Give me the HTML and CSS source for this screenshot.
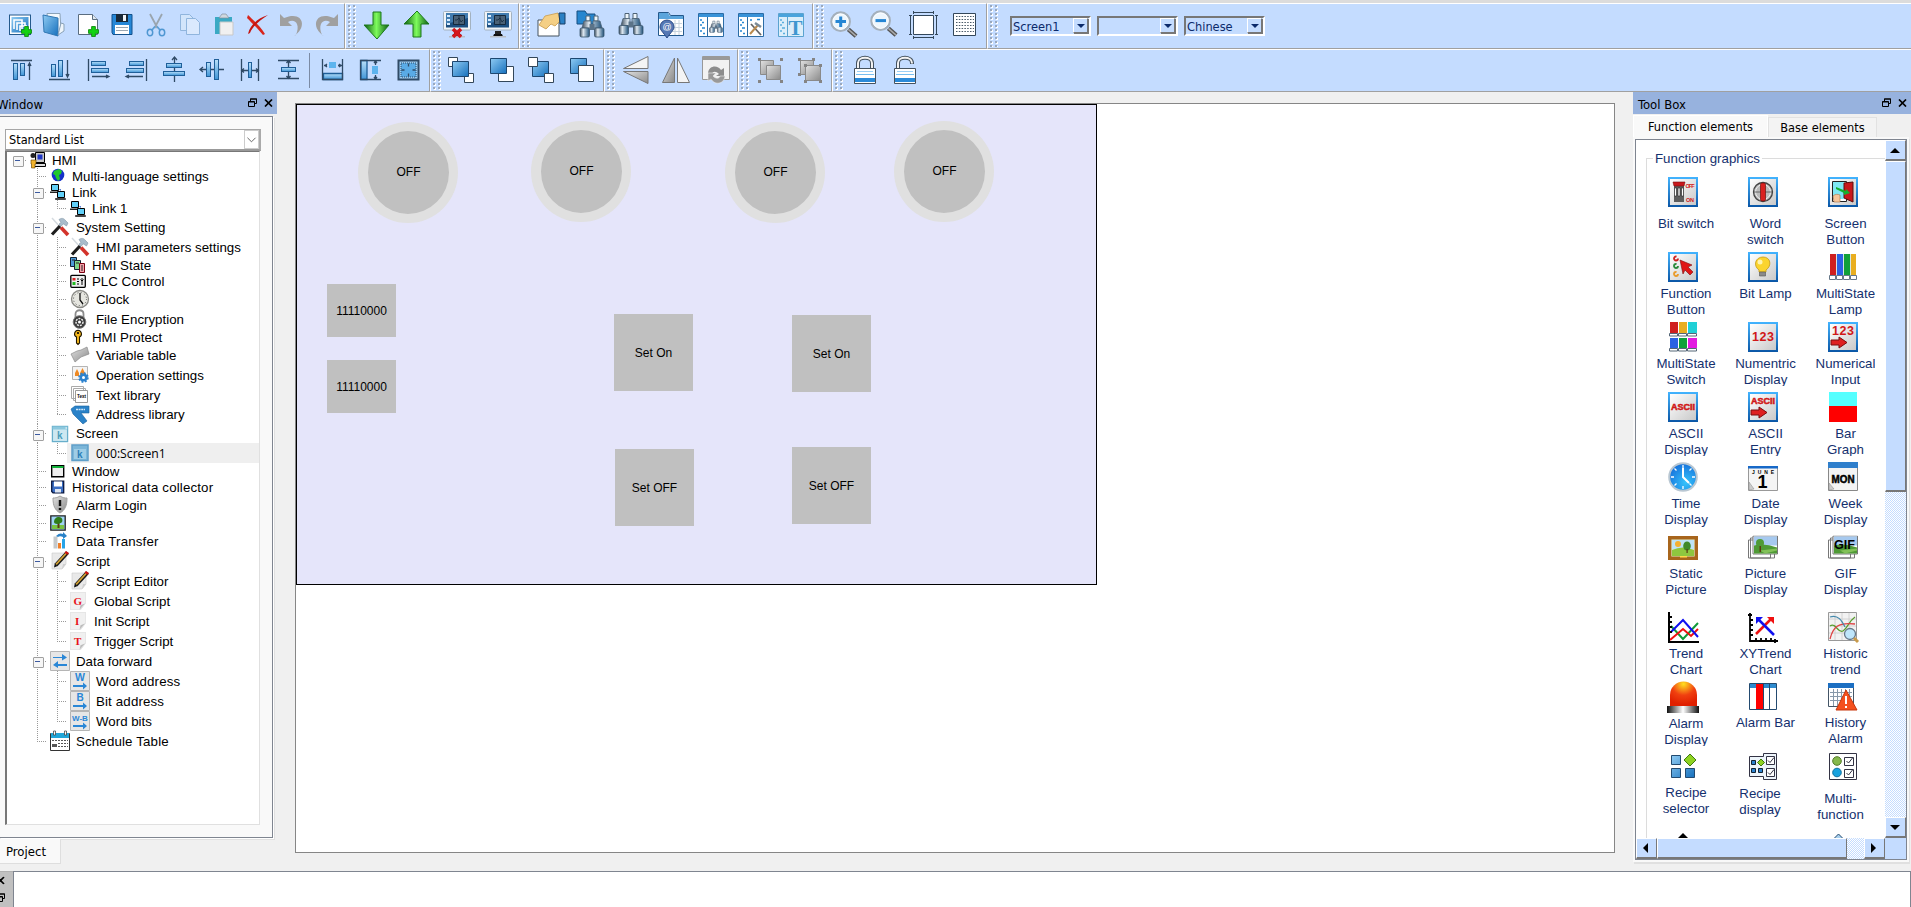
FILE: index.html
```html
<!DOCTYPE html>
<html lang="en">
<head>
<meta charset="utf-8">
<title>HMI Editor</title>
<link rel="stylesheet" href="styles.css">
</head>
<body>
<svg class="defs" width="0" height="0" aria-hidden="true">
  <defs>
    <linearGradient id="gB" x1="0" y1="0" x2="1" y2="1"><stop offset="0" stop-color="#8fcbf3"/><stop offset="1" stop-color="#1670bd"/></linearGradient>
    <linearGradient id="gL" x1="0" y1="0" x2="0" y2="1"><stop offset="0" stop-color="#b9e0fa"/><stop offset="1" stop-color="#3e94d6"/></linearGradient>
    <linearGradient id="gS" x1="0" y1="0" x2="1" y2="1"><stop offset="0" stop-color="#e2e2e2"/><stop offset="1" stop-color="#8a8a8a"/></linearGradient>
    <linearGradient id="gN" x1="0" y1="0" x2="1" y2="0"><stop offset="0" stop-color="#0c5a12"/><stop offset=".5" stop-color="#7dfb5c"/><stop offset="1" stop-color="#0c5a12"/></linearGradient>
    <linearGradient id="gP" x1="0" y1="0" x2="1" y2="0"><stop offset="0" stop-color="#3a4a5a"/><stop offset=".35" stop-color="#dfe9f1"/><stop offset="1" stop-color="#1d4f78"/></linearGradient>
    <linearGradient id="gM" x1="0" y1="0" x2="1" y2="0"><stop offset="0" stop-color="#111"/><stop offset=".5" stop-color="#fff"/><stop offset="1" stop-color="#111"/></linearGradient>
    <linearGradient id="gF" x1="0" y1="0" x2="0" y2="1"><stop offset="0" stop-color="#43b4ff"/><stop offset="1" stop-color="#0a56a6"/></linearGradient>
    <linearGradient id="gI" x1="0" y1="0" x2="1" y2="1"><stop offset="0" stop-color="#fff"/><stop offset="1" stop-color="#c9c9c9"/></linearGradient>
    <radialGradient id="gR" cx=".5" cy=".1" r=".8"><stop offset="0" stop-color="#ffe020"/><stop offset=".55" stop-color="#f04010"/><stop offset="1" stop-color="#e02000"/></radialGradient>
    <radialGradient id="gC" cx=".6" cy=".7" r=".8"><stop offset="0" stop-color="#35c3fb"/><stop offset="1" stop-color="#1267d8"/></radialGradient>
    <symbol id="plus" viewBox="0 0 10 10"><path d="M3.3.5h3.4v2.8h2.8v3.4H6.700v2.800H3.300V6.700H.5V3.300h2.800z" fill="#12d312" stroke="#0a8a0a" stroke-width=".8"/></symbol>
    <symbol id="bino" viewBox="0 0 26 24"><path d="M7 2h4v5H7zM15 2h4v5h-4z" fill="#eef5fa" stroke="#4d6275"/><path d="M5 7h7v7H3zM14 7h7l2 7h-9z" fill="url(#gP)" stroke="#4d6275" stroke-width=".8"/><path d="M10.500 10h5v6h-5z" fill="#5b7388"/><rect x="1" y="14" width="9.500" height="9" rx="1.500" fill="url(#gP)" stroke="#3b556c" stroke-width=".8"/><rect x="15.500" y="14" width="9.500" height="9" rx="1.500" fill="url(#gP)" stroke="#3b556c" stroke-width=".8"/></symbol>
    <symbol id="monitor" viewBox="0 0 28 28"><rect x=".5" y=".5" width="27" height="18.500" rx="1" fill="#f1f4f7" stroke="#a3b2c0"/><rect x="3" y="2" width="22" height="14.500" fill="#1d4f80"/><path d="M3 2h22v5L3 13z" fill="#5b9bd0" opacity=".6"/><path d="M10.500 4.500h11v9h-11z" fill="#4a6176" stroke="#14293d"/><path d="M12 9h2l2-2 2 4 2-2M16 5v8" fill="none" stroke="#14293d" stroke-width=".8"/><path d="M4 4h3v2H4zM4 8h3v2H4zM4 12h3v2H4z" fill="#d8ecff"/><path d="M11 20h6v3h-6z" fill="#222"/><path d="M10 23h8l1 2.500H9z" fill="#111"/><path d="M6 25h16v1.500H6z" fill="#b9bec4"/></symbol>
    <symbol id="lens" viewBox="0 0 30 30"><path d="M20 19l8 7" stroke="#555" stroke-width="4.500"/><path d="M20 19l8 7" stroke="#a9a9a9" stroke-width="1.500"/><circle cx="12" cy="11" r="9.500" fill="#edf6fd" stroke="#a4b0bc" stroke-width="2.400"/><circle cx="12" cy="11" r="8" fill="none" stroke="#fff"/></symbol>
    <symbol id="frame" viewBox="0 0 30 30"><rect width="30" height="30" fill="url(#gF)"/><rect x="2" y="2" width="26" height="26" fill="url(#gI)"/></symbol>
    <symbol id="pc" viewBox="0 0 16 16"><path d="M1.500.5h7v6h-7z" fill="#62d0f8" stroke="#000"/><path d="M0 7.500h9v1.500H0z" fill="#222"/><path d="M9.500 5.500h1v1" stroke="#2456c8" fill="none"/><path d="M7.500 7.500h7v6h-7z" fill="#62d0f8" stroke="#000"/><path d="M5.500 14.500h10v1h-10z" fill="#ddd" stroke="#000" stroke-width=".7"/></symbol>
    <symbol id="tools" viewBox="0 0 20 20"><path d="M2 1l9 10" stroke="#d5dbe0" stroke-width="1.500"/><path d="M9 2.500c3-2 5-1 6 .5l3 3-1.500 3-3-2-2.500 2-2-2 2-1.500z" fill="#a9bccb" stroke="#7d93a5" stroke-width=".6"/><path d="M10 9l-8 8.500" stroke="#1d1d1d" stroke-width="3.200"/><path d="M11 10.500l7 7.500" stroke="#d3332b" stroke-width="3.600"/></symbol>
    <symbol id="pencil" viewBox="0 0 20 20"><path d="M2 2h14v11l-4 5H2z" fill="#e9e9e9" stroke="#c9c9c9" stroke-width=".6"/><path d="M12 18l1-5h3z" fill="#cfcfcf"/><path d="M17.500 1.500L6 14" stroke="#1a1a1a" stroke-width="4"/><path d="M16.500 2L6 13.500" stroke="#d6a432" stroke-width="1.800"/><path d="M16 0l3 2-1.500 1.800-3-2z" fill="#c11"/><path d="M4 16.500l.8-4 2.800 2.500z" fill="#111"/></symbol>
    <symbol id="kwin" viewBox="0 0 17 17"><rect x=".8" y=".8" width="15.400" height="15.400" fill="#cde8f1" stroke="#67aecb" stroke-width="1.500"/><path d="M1 1h15v3H1z" fill="#8cc8de"/><path d="M14 2h1.500v1H14z" fill="#fff"/></symbol>
    <symbol id="page" viewBox="0 0 16 18"><path d="M.3.3h15.400V11l-5 6.700H.3z" fill="#f0f0f0" stroke="#d6d6d6" stroke-width=".6"/><path d="M9.500 17.700l1-4.500 4.500-1.700z" fill="#bdbdbd"/></symbol>
    <symbol id="tile" viewBox="0 0 20 20"><path d="M.5.5h19v19H.5z" fill="#e6e6e6" stroke="#b5b5b5"/></symbol>
    <symbol id="pic" viewBox="0 0 30 24"><path d="M.5 4.500h22v18h-22zM2.500 2.500h24v20h-24z" fill="#fff" stroke="#777"/><path d="M5 .5h24.500v18H5z" fill="#fff" stroke="#777"/><path d="M6 1h23v9H6z" fill="#a6c9ef"/><path d="M6 10q10-3 23 2v6H6z" fill="#4f9a35"/><path d="M12 15l17-2v2l-12 3z" fill="#82c158"/></symbol>
    <symbol id="restore" viewBox="0 0 9 9"><path d="M2.500 3V1h6v4.500H6.500M2 1h7" fill="none" stroke="#000"/><path d="M.5 3.500h6v5h-6zM.5 4h6" fill="none" stroke="#000"/></symbol>
    <symbol id="close" viewBox="0 0 9 8"><path d="M1 .5l7 7M8 .5l-7 7" fill="none" stroke="#000" stroke-width="1.700"/></symbol>
  </defs>
</svg>

<header class="toolbars">
  <div class="bar-row row-main">
    <div class="bar t1">
      <div class="btn"><svg viewBox="0 0 28 28"><rect x="3.500" y="4" width="21" height="19.500" fill="#fff" stroke="#24598c"/><rect x="5.500" y="6" width="17" height="15.500" fill="url(#gB)"/><path d="M8 18V9h8v9M11 19v-7h8v7M14 20v-5h7" fill="none" stroke="#fff" stroke-width="1.600"/><use href="#plus" x="15" y="15" width="11" height="11"/></svg></div>
      <div class="btn"><svg viewBox="0 0 28 28"><path d="M7 2.500h13l1 18H9z" fill="#f4f9fd" stroke="#8aa2b8"/><path d="M3 4l15 3v18L4 21z" fill="url(#gB)" stroke="#3177b3"/><path d="M21 12l3 1v7l-6 4z" fill="#eef5fb" stroke="#8aa2b8"/></svg></div>
      <div class="btn"><svg viewBox="0 0 28 28"><path d="M4.500 3.500h14l5 5v15h-19z" fill="#fff" stroke="#5a6d80"/><path d="M18.500 3.500v5h5" fill="#dfe8f0" stroke="#5a6d80"/><use href="#plus" x="14" y="15" width="11" height="11"/></svg></div>
      <div class="btn"><svg viewBox="0 0 28 28"><path d="M4 3.500h20v20H5l-1-2z" fill="#2687d6" stroke="#13518c"/><path d="M8 3h12v8H8z" fill="#1b2937"/><path d="M15 4h3v6h-3z" fill="#f3f6f8"/><path d="M7 14h14v9H7z" fill="#fff"/><path d="M8 16.500h12M8 19.500h12" stroke="#9aa7b2"/></svg></div>
      <div class="btn"><svg viewBox="0 0 28 28"><path d="M8 3l7.500 14M20 3l-7.500 14" stroke="#9aa5ae" stroke-width="1.800"/><path d="M15 15.500l3 3.500M13 15.500L10 19" stroke="#5b9fd6" stroke-width="1.800"/><ellipse cx="8" cy="21.500" rx="2.700" ry="3.300" fill="none" stroke="#4f97d2" stroke-width="1.500"/><ellipse cx="20" cy="21.500" rx="2.700" ry="3.300" fill="none" stroke="#4f97d2" stroke-width="1.500"/></svg></div>
      <div class="btn dim"><svg viewBox="0 0 28 28"><path d="M4.500 3.500h9l4 4v12h-13z" fill="#dcebfa" stroke="#6f9cc8"/><path d="M10.500 7.500h9l4 4v12h-13z" fill="#e9f3fc" stroke="#6f9cc8"/></svg></div>
      <div class="btn"><svg viewBox="0 0 28 28"><path d="M5 6h17v17H5z" fill="#3aa9c4"/><path d="M9 7l3-4h4l3 4z" fill="#cfd8df" stroke="#81909d" stroke-width=".7"/><path d="M10 11h13v13H10z" fill="#f0f0f0" stroke="#c8c8c8"/></svg></div>
      <div class="btn"><svg viewBox="0 0 28 28"><path d="M4 4c4 4 12 11 17 19l-2 1C15 19 8 12 3 7z" fill="#d8241b"/><path d="M24 4C16 9 9 15 6 22l-2 1C6 14 14 7 24 4z" fill="#c41510"/></svg></div>
      <div class="btn"><svg viewBox="0 0 28 28"><path d="M2 3v12h12l-4-4c6-4 13 1 8 13l-2 1C30 16 25-1 6 7z" fill="#a0a0a0"/></svg></div>
      <div class="btn"><svg viewBox="0 0 28 28"><path d="M26 3v12H14l4-4c-6-4-13 1-8 13l2 1C-2 16 3-1 22 7z" fill="#a0a0a0"/></svg></div>
    </div>
    <div class="bar t2 grip">
      <div class="btn"><svg viewBox="0 0 28 28"><path d="M10 1h8v13h8L14 28 1 14h9z" fill="url(#gN)" stroke="#1c7a1c"/></svg></div>
      <div class="btn"><svg viewBox="0 0 28 28"><path d="M10 26h8V13h8L14 0 1 13h9z" fill="url(#gN)" stroke="#1c7a1c"/></svg></div>
      <div class="btn"><svg viewBox="0 0 28 28"><use href="#monitor" width="28" height="28"/><path d="M10 18l8 8M18 18l-8 8" stroke="#d5161b" stroke-width="3.500"/></svg></div>
      <div class="btn"><svg viewBox="0 0 28 28"><use href="#monitor" width="28" height="28"/></svg></div>
    </div>
    <div class="bar t3 grip">
      <div class="btn"><svg viewBox="0 0 28 28"><path d="M1 9h21v16H1z" fill="#fff" stroke="#44525f"/><path d="M2 14L8 5l13-3 2 8-5 5-4-2-5 5z" fill="#f4cf85" stroke="#c89a4b" stroke-width=".8"/><path d="M22 2h6v11h-5z" fill="#2a80c4" stroke="#173f66"/></svg></div>
      <div class="btn"><svg viewBox="0 0 28 28"><path d="M0 0h8l2 3h8v10H0z" fill="#2686cf" stroke="#174f80"/><use href="#bino" x="2" y="3" width="26" height="24"/></svg></div>
      <div class="btn"><svg viewBox="0 0 28 28"><use href="#bino" x="1" y="0" width="26" height="25"/></svg></div>
      <div class="btn"><svg viewBox="0 0 28 28"><path d="M1.500 1.500h10l2 3h13v20h-25z" fill="#fff" stroke="#24598c"/><path d="M2 2h9l2 3h13v3H2z" fill="#5ba5dc"/><path d="M14 12.500h11M14 16.500h11M14 20.500h11M18 9v15M22 9v15" stroke="#c8d4de"/><path d="M10 27c-4-6-7-8-7-11a7 7 0 0 1 14 0c0 3-3 5-7 11z" fill="#5678b4" stroke="#2b4c88"/><text x="5.500" y="19" font-size="9" fill="#fff">@</text></svg></div>
      <div class="btn"><svg viewBox="0 0 28 28"><path d="M1.500 2.500h25v23h-25z" fill="#fff" stroke="#2b6ca6"/><path d="M2 3h24v3H2z" fill="#3a93d8"/><path d="M10.500 6v19" stroke="#2b6ca6"/><path d="M3 9h2M5 11.500h2M3 14h2M5 17h3M3 20h2M6 22.500h2" stroke="#2487d2" stroke-width="1.600"/><use href="#bino" x="12" y="9" width="14" height="13"/></svg></div>
      <div class="btn"><svg viewBox="0 0 28 28"><path d="M1.500 2.500h25v23h-25z" fill="#fff" stroke="#2b6ca6"/><path d="M2 3h24v3H2z" fill="#3a93d8"/><path d="M10.500 6v19" stroke="#2b6ca6"/><path d="M3 9h2M5 11.500h2M3 14h2M5 17h3M3 20h2M6 22.500h2M13 9h2M20 8.500h3" stroke="#2487d2" stroke-width="1.600"/><path d="M14 13l10 11" stroke="#666" stroke-width="1.800"/><path d="M21 14l-8 9" stroke="#b98b4f" stroke-width="2"/><path d="M18 12l6 4" stroke="#7b8b98" stroke-width="2.500"/></svg></div>
      <div class="btn"><svg viewBox="0 0 28 28"><path d="M1.500 2.500h25v23h-25z" fill="#dceefa" stroke="#5ba3cf"/><path d="M2 3h24v3H2z" fill="#4aa3dc"/><path d="M10.500 6v19" stroke="#5ba3cf"/><path d="M3 9h2M5 11.500h2M3 14h2M5 17h3M3 20h2M6 22.500h2" stroke="#59aede" stroke-width="1.600"/><text x="11.500" y="24" class="serif" font-size="21" fill="#3f97d0">T</text></svg></div>
    </div>
    <div class="bar t4 grip">
      <div class="btn"><svg viewBox="0 0 28 28"><use href="#lens" x="-1" y="0" width="29" height="29"/><path d="M5.500 10.600h10.500M10.700 5.500V16" stroke="#2686d4" stroke-width="3"/></svg></div>
      <div class="btn"><svg viewBox="0 0 28 28"><use href="#lens" x="-1" y="-1" width="29" height="29"/><path d="M5.500 9.600h10.500" stroke="#2686d4" stroke-width="3"/></svg></div>
      <div class="btn"><svg viewBox="0 0 28 28"><path d="M3.500 4.500h20v19h-20z" fill="#fff" stroke="#33475a"/><path d="M3 1.500h21M3.500 0v3M23.500 0v3M3 26.500h21M3.500 25v3M23.500 25v3M.5 4v20M-1 4.500h3M-1 23.500h3M26.500 4v20M25 4.500h3M25 23.500h3" stroke="#33475a"/></svg></div>
      <div class="btn"><svg viewBox="0 0 28 28"><path d="M2.500 2.500h22v22h-22z" fill="#fff" stroke="#33475a"/><path d="M5 5.500h18M5 8.500h18M5 11.500h18M5 14.500h18M5 17.500h18M5 20.500h18" stroke="#4a5a68" stroke-dasharray="1.500 1.300"/></svg></div>
    </div>
    <div class="bar t5 grip">
      <div class="combo"><span>Screen1</span><i></i></div>
      <div class="combo"><span></span><i></i></div>
      <div class="combo"><span>Chinese</span><i></i></div>
    </div>
  </div>
  <div class="bar-row row-align">
    <div class="bar a1">
      <div class="btn"><svg class="ln" viewBox="0 0 28 28"><path d="M3 4.500h21M21.500 8v16M20 10l1.500-3 1.500 3"/><rect class="f" x="5.500" y="7.500" width="4" height="16"/><rect class="f" x="12.500" y="7.500" width="4" height="12"/></svg></div>
      <div class="btn"><svg class="ln" viewBox="0 0 28 28"><path d="M3 23.500h21M21.500 4v16M20 18l1.500 3 1.500-3"/><rect class="f" x="5.500" y="8.500" width="4" height="12"/><rect class="f" x="12.500" y="4.500" width="4" height="16"/></svg></div>
      <div class="btn"><svg class="ln" viewBox="0 0 28 28"><path d="M4.500 3v22M8 20.500h16M22 19l3 1.500-3 1.500"/><rect class="f" x="7.500" y="5.500" width="14" height="4"/><rect class="f" x="7.500" y="12.500" width="17" height="4"/></svg></div>
      <div class="btn"><svg class="ln" viewBox="0 0 28 28"><path d="M24.500 3v22M5 20.500h16M7 19l-3 1.500 3 1.500"/><rect class="f" x="7.500" y="5.500" width="14" height="4"/><rect class="f" x="4.500" y="12.500" width="17" height="4"/></svg></div>
      <div class="btn"><svg class="ln" viewBox="0 0 28 28"><path d="M14.500 2v24M12 4l2.500-3L17 4"/><rect class="f" x="6.500" y="7.500" width="15" height="4"/><rect class="f" x="3.500" y="15.500" width="21" height="4"/></svg></div>
      <div class="btn"><svg class="ln" viewBox="0 0 28 28"><path d="M2 13.500h24M5 11l-3 2.500L5 16"/><rect class="f" x="8.500" y="6.500" width="4" height="14"/><rect class="f" x="16.500" y="3.500" width="4" height="20"/></svg></div>
      <div class="btn"><svg class="ln" viewBox="0 0 28 28"><path d="M5.500 3v22M22.500 3v22M6 14.500h17M8 12.500l-2.500 2 2.500 2M20 12.500l2.500 2-2.500 2"/><rect class="f" x="12.500" y="6.500" width="3" height="15"/></svg></div>
      <div class="btn"><svg class="ln" viewBox="0 0 28 28"><path d="M4 4.500h21M4 22.500h21M14.500 5v17M12.500 7l2-2.500 2 2.500M12.500 20l2 2.500 2-2.500"/><rect class="f" x="7.500" y="11.500" width="14" height="4"/></svg></div>
      <div class="sep"></div>
      <div class="btn"><svg class="ln" viewBox="0 0 28 28"><path class="f" d="M4.500 17.500h19v6h-19z"/><path d="M3.500 3v20.500h20V3M5 9.500h3M19 9.500h4M8 8l-2 1.500L8 11M20 8l2 1.500-2 1.500" stroke-width="1.600"/><rect x="10" y="6" width="7" height="6" fill="#5db4ee" stroke="none"/></svg></div>
      <div class="btn"><svg class="ln" viewBox="0 0 28 28"><path class="f" d="M4 4.500h6v19H4z"/><path d="M24 4.500H3.500v19H24M18.500 5v4M18.500 19v4M17 7l1.500-2L20 7M17 21l1.500 2 1.500-2" stroke-width="1.600"/><rect x="15" y="10" width="6" height="8" fill="#5db4ee" stroke="none"/></svg></div>
      <div class="btn"><svg class="ln" viewBox="0 0 28 28"><path d="M3.500 4.500h20v19h-20z" class="k"/><path d="M6 7h15v14H6z" class="m"/><path d="M13.500 7.500v3M13.500 17.500v3M6.500 14h3M17.500 14h3" stroke-width="2.400"/></svg></div>
    </div>
    <div class="bar a2 grip">
      <div class="btn"><svg class="sq" viewBox="0 0 28 28"><path class="w" d="M1.500 1.500h9v9h-9zM17.500 17.500h9v9h-9z"/><path class="b" d="M5.500 5.500h16v15h-16z"/></svg></div>
      <div class="btn"><svg class="sq" viewBox="0 0 28 28"><path class="w" d="M11.500 10.500h15v15h-15z"/><path class="b" d="M3.500 2.500h16v15h-16z"/></svg></div>
      <div class="btn"><svg class="sq" viewBox="0 0 28 28"><path class="b" d="M5.500 5.500h16v15h-16z"/><path class="w" d="M1.500 1.500h9v9h-9zM17.500 17.500h9v9h-9z"/></svg></div>
      <div class="btn"><svg class="sq" viewBox="0 0 28 28"><path class="b" d="M2.500 2.500h16v15h-16z"/><path class="w" d="M10.500 9.500h15v16h-15z"/></svg></div>
    </div>
    <div class="bar a3 grip">
      <div class="btn"><svg viewBox="0 0 28 28"><path d="M26 .5v12L1.500 12.500z" fill="#f4f4f4" stroke="#777"/><path d="M26 27.500v-12H1.500z" fill="url(#gS)" stroke="#777"/></svg></div>
      <div class="btn"><svg viewBox="0 0 28 28"><path d="M12.500 2v24.500H.5z" fill="url(#gS)" stroke="#777"/><path d="M15.500 2v24.500h12z" fill="#f4f4f4" stroke="#777"/></svg></div>
      <div class="btn"><svg viewBox="0 0 28 28"><path d="M.5.500h27v23H.5z" fill="#f2f2f2" stroke="#999"/><path d="M1 1h26v3H1z" fill="#999"/><path d="M6 17c1-8 10-8 13-3l3-2v8h-8l3-2c-3-3-6-3-7 0z" fill="#8d8d8d"/><path d="M23 20c-1 9-11 9-14 3l-3 2v-8h8l-3 3c3 3 6 3 7 0z" fill="#999" stroke="#eee" stroke-width=".6"/></svg></div>
    </div>
    <div class="bar a4 grip">
      <div class="btn"><svg viewBox="0 0 28 28"><path d="M4.500 4.500h13v14h-13z" fill="url(#gS)" stroke="#8a8a8a"/><path d="M10.500 9.500h14v14h-14z" fill="url(#gS)" stroke="#8a8a8a"/><path d="M2 2h3v3H2zM24 2h3v3h-3zM2 24h3v3H2zM24 24h3v3h-3z" fill="#858585"/></svg></div>
      <div class="btn"><svg viewBox="0 0 28 28"><path d="M4.500 4.500h13v14h-13z" fill="url(#gS)" stroke="#8a8a8a"/><path d="M9.500 9.500h15v15h-15z" fill="url(#gS)" stroke="#8a8a8a"/><path d="M2 2h3v3H2zM16 2h3v3h-3zM2 17h3v3H2zM23 8h3v3h-3zM8 24h3v3H8zM23 24h3v3h-3zM8 8h3v3H8z" fill="#858585"/></svg></div>
    </div>
    <div class="bar a5 grip">
      <div class="btn"><svg viewBox="0 0 28 28"><path d="M7 13V7c0-7 14-7 14 0v6" fill="none" stroke="#45525e" stroke-width="4"/><path d="M7 13V7c0-7 14-7 14 0v6" fill="none" stroke="#f2f2f2" stroke-width="2"/><path d="M3.500 12.500h21v15h-21z" fill="#fff" stroke="#45525e"/><path d="M6 15.500h16" stroke="#9bd0f6"/><path d="M5 18.500h18" stroke="#76bdf0"/><path d="M4 22h20v4H4z" fill="#2b8ad8"/></svg></div>
      <div class="btn"><svg viewBox="0 0 28 28"><path d="M7 13V7c0-7 14-7 14 0v1" fill="none" stroke="#45525e" stroke-width="4"/><path d="M7 13V7c0-7 14-7 14 0v.5" fill="none" stroke="#f2f2f2" stroke-width="2"/><path d="M3.500 12.500h21v15h-21z" fill="#fff" stroke="#45525e"/><path d="M6 15.500h16" stroke="#9bd0f6"/><path d="M5 18.500h18" stroke="#76bdf0"/><path d="M4 22h20v4H4z" fill="#2b8ad8"/></svg></div>
    </div>
  </div>
</header>

<main class="work">
  <aside class="dock left">
    <div class="dock-title"><span class="cut">Window</span><svg class="ri" viewBox="0 0 9 9"><use href="#restore"/></svg><svg class="cl" viewBox="0 0 9 8"><use href="#close"/></svg></div>
    <div class="left-body">
      <div class="select"><span>Standard List</span><b><svg viewBox="0 0 10 6"><path d="M.5.500l4.500 4.500L9.500.5" fill="none" stroke="#555"/></svg></b></div>
      <div class="tree">
        <div class="n h16"><i class="x root"></i><svg class="s16" viewBox="0 0 16 16"><path d="M5.500.5h9v10h-9z" fill="#c8c8c8" stroke="#000"/><path d="M7.500 2.500h5v5h-5z" fill="#2038c8"/><path d="M4.500 11.500h11v3h-11z" fill="#ddd" stroke="#000"/><circle cx="3" cy="3.500" r="2.500" fill="#222"/><path d="M1 8h5v4H5v4H1.500v-4H1z" fill="#f2b42d" stroke="#5a3a00" stroke-width=".6"/></svg><span>HMI</span></div>
        <div class="n h16"><i></i><i class="b"></i><svg class="s16" viewBox="0 0 16 16"><circle cx="8" cy="7" r="6.300" fill="#1430c8"/><path d="M4 3l5-2 3 2-1 3-2 1 1 4-2 2-2-3-1-3-2-1z" fill="#20c82c"/></svg><span>Multi-language settings</span></div>
        <div class="n h16"><i></i><i class="b x"></i><svg class="s16"><use href="#pc"/></svg><span>Link</span></div>
        <div class="n h17"><i></i><i class="v"></i><i class="l"></i><svg class="s16"><use href="#pc"/></svg><span>Link 1</span></div>
        <div class="n h20"><i></i><i class="b x"></i><svg class="s20"><use href="#tools"/></svg><span>System Setting</span></div>
        <div class="n h20"><i></i><i class="v"></i><i class="b"></i><svg class="s20"><use href="#tools"/></svg><span>HMI parameters settings</span></div>
        <div class="n h16"><i></i><i class="v"></i><i class="b"></i><svg class="s16" viewBox="0 0 16 16"><path d="M.5.500h6v9h-6z" fill="#4e9bd8" stroke="#123"/><path d="M4.500 3.500h6v9h-6z" fill="#7fd68a" stroke="#123"/><path d="M9.500 6.500h5v9h-5z" fill="#f3a0a8" stroke="#701"/><path d="M2 3h3M6 6h3M11 9h2M11 11h2M11 13h2" stroke="#222"/></svg><span>HMI State</span></div>
        <div class="n h16"><i></i><i class="v"></i><i class="b"></i><svg class="s16" viewBox="0 0 16 16"><rect x=".8" y="2.300" width="14.500" height="12" rx="1" fill="#eee" stroke="#000" stroke-width="1.300"/><path d="M2.500 5h3v2.500h-3z" fill="#d22"/><path d="M2.500 9h3v3h-3z" fill="#2b2"/><path d="M7 6h2M7 8.500h2M7 11h2M12 5v7M10.500 6.500l1.500 1.500 1.500-1.500" stroke="#000" fill="none"/></svg><span>PLC Control</span></div>
        <div class="n h20"><i></i><i class="v"></i><i class="b"></i><svg class="s20" viewBox="0 0 20 20"><circle cx="10" cy="10" r="8.500" fill="#e6e6e0" stroke="#8a8a86" stroke-width="1.300"/><path d="M10 4v7l3 4" stroke="#111" fill="none" stroke-width="1.300"/><circle cx="10" cy="10" r="6.500" fill="none" stroke="#555" stroke-dasharray="1 2.400"/></svg><span>Clock</span></div>
        <div class="n h20"><i></i><i class="v"></i><i class="b"></i><svg class="s20" viewBox="0 0 20 20"><path d="M5.500 9V5c0-5 8-5 8 0v4" fill="none" stroke="#8b8b8b" stroke-width="1.800"/><circle cx="9.500" cy="13" r="6.300" fill="#3a3a3a" stroke="#777"/><circle cx="9.500" cy="13" r="3.500" fill="none" stroke="#eee" stroke-width="1.500" stroke-dasharray="2 1"/><circle cx="9.500" cy="13" r="1.500" fill="#fff"/></svg><span>File Encryption</span></div>
        <div class="n h16"><i></i><i class="v"></i><i class="b"></i><svg class="s16" viewBox="0 0 16 16"><path d="M8 1.200a3.600 3.600 0 0 1 1.500 6.800v6l-1.500 1.500-1.500-1.500V8A3.600 3.600 0 0 1 8 1.200z" fill="#f5b81e" stroke="#221800" stroke-width="1.100"/><circle cx="8" cy="4" r="1.100"/></svg><span>HMI Protect</span></div>
        <div class="n h20"><i></i><i class="v"></i><i class="b"></i><svg class="s20" viewBox="0 0 20 20"><path d="M1 9l6-3 4-1 6-3 2 7-8 3-6 5z" fill="url(#gS)" stroke="#8b8b8b" stroke-width=".7"/></svg><span>Variable table</span></div>
        <div class="n h20"><i></i><i class="v"></i><i class="b"></i><svg class="s20" viewBox="0 0 20 20"><path d="M2.500 1.500h15v13h-15z" fill="#f4f4f4" stroke="#b5b5b5"/><path d="M5 8l2-4 2 4v3H5zM10 8l2.500-5L15 8v2h-5z" fill="#f08a24"/><circle cx="13.500" cy="12.500" r="4" fill="#2b82cf"/><circle cx="13.500" cy="12.500" r="4.500" fill="none" stroke="#2b82cf" stroke-width="1.500" stroke-dasharray="2 1.500"/><circle cx="13.500" cy="12.500" r="1.500" fill="#fff"/></svg><span>Operation settings</span></div>
        <div class="n h20"><i></i><i class="v"></i><i class="b"></i><svg class="s20" viewBox="0 0 20 20"><path d="M1.500 1.500h12v12h-12zM3.500 3.500h12v12h-12z" fill="#fff" stroke="#aaa"/><path d="M5.500 5.500h12v12h-12z" fill="#fff" stroke="#999"/><text x="7" y="13" font-size="4.500" font-weight="700">Text</text></svg><span>Text library</span></div>
        <div class="n h19"><i></i><i class="v"></i><i class="l"></i><svg class="s20" viewBox="0 0 20 20"><path d="M1 4l4-3h14v7h-8l6 8-4 3L3 9z" fill="#2a82c8" stroke="#1a639f" stroke-width=".6"/><path d="M6 4.500h9" stroke="#cfe6f8" stroke-width="1.500" stroke-dasharray="2 .6"/></svg><span>Address library</span></div>
        <div class="n h19"><i></i><i class="b x"></i><svg class="s20" viewBox="0 0 20 20"><use href="#kwin" x="1.500" y="1.500" width="17" height="17"/><text x="7" y="15" font-size="10" font-weight="700" fill="#4b9dbb">k</text></svg><span>Screen</span></div>
        <div class="n h20"><i></i><i class="v"></i><i class="l"></i><div class="sel"><svg class="s20" viewBox="0 0 20 20"><rect x="2" y="2" width="16" height="15.500" fill="#7cb6d8" stroke="#5f9fc9" stroke-width="1.500"/><path d="M4 6h12v10H4z" fill="#9fcde6"/><text x="7" y="15" font-size="10" font-weight="700" fill="#2c7fb8">k</text></svg><span>000:Screen1</span></div></div>
        <div class="n h16"><i></i><i class="b"></i><svg class="s16" viewBox="0 0 16 16"><path d="M1.700 2.700h12v11h-12z" fill="#eee" stroke="#000" stroke-width="1.400"/><path d="M2 3h11.500v2H2z" fill="#12b33a"/></svg><span>Window</span></div>
        <div class="n h16 wide"><i></i><i class="b"></i><svg class="s16" viewBox="0 0 16 16"><path d="M1.700 2.200h12v11.600H3L1.700 12.500z" fill="#3c6fc4" stroke="#081640" stroke-width="1.300"/><path d="M4 2.500h8v5H4z" fill="#fff"/><path d="M5 10h6v3.500H5z" fill="#dfe6f2"/></svg><span>Historical data collector</span></div>
        <div class="n h20"><i></i><i class="b"></i><svg class="s20" viewBox="0 0 20 20"><path d="M10 1c3 2 5 2 7 2 0 8-2 12-7 15C5 15 3 11 3 3c2 0 4 0 7-2z" fill="url(#gS)" stroke="#a0a0a0"/><path d="M10 5v6M10 13v2" stroke="#111" stroke-width="2.400"/></svg><span>Alarm Login</span></div>
        <div class="n h16"><i></i><i class="b"></i><svg class="s16" viewBox="0 0 16 16"><path d="M.8.800h14.400v14.400H.8z" fill="#9fd4f4" stroke="#222" stroke-width="1.300"/><path d="M2 10h12v4H2z" fill="#79c443"/><path d="M7.500 8h2v5h-2z" fill="#5b3a10"/><path d="M4 7c0-3 2-5 5-5s4 3 3 5-8 3-8 0z" fill="#2f7d19"/></svg><span>Recipe</span></div>
        <div class="n h20 wide"><i></i><i class="b"></i><svg class="s20" viewBox="0 0 20 20"><path d="M3.500 5.500h4v12h-4z" fill="#c4c8cb"/><path d="M8 12h3v5.500H8z" fill="#f0812b"/><path d="M12 8h3v9.500h-3z" fill="#27a4e8"/><path d="M6 5c3-3 5-3 7-2V1l4 4-4 3V6c-2-1-4-1-5 0z" fill="#2a82c8"/></svg><span>Data Transfer</span></div>
        <div class="n h20"><i></i><i class="b x"></i><svg class="s20"><use href="#pencil"/></svg><span>Script</span></div>
        <div class="n h20"><i></i><i class="v"></i><i class="b"></i><svg class="s20"><use href="#pencil"/></svg><span>Script Editor</span></div>
        <div class="n h20 sc"><i></i><i class="v"></i><i class="b"></i><svg class="s20" viewBox="0 0 20 20"><use href="#page" x="0" y="1" width="16" height="18"/><text x="3.500" y="14">G</text></svg><span>Global Script</span></div>
        <div class="n h20 sc"><i></i><i class="v"></i><i class="b"></i><svg class="s20" viewBox="0 0 20 20"><use href="#page" x="0" y="1" width="16" height="18"/><text x="5" y="14">I</text></svg><span>Init Script</span></div>
        <div class="n h20 sc"><i></i><i class="v"></i><i class="l"></i><svg class="s20" viewBox="0 0 20 20"><use href="#page" x="0" y="1" width="16" height="18"/><text x="4" y="14">T</text></svg><span>Trigger Script</span></div>
        <div class="n h20"><i></i><i class="b x"></i><svg class="s20" viewBox="0 0 20 20"><use href="#tile"/><path d="M3 6h9V3l5 3.500-5 3V7H3zM17 13H8v-3l-5 4 5 3v-2h9z" fill="#2a87d6"/></svg><span>Data forward</span></div>
        <div class="n h20 wd wide"><i></i><i class="v"></i><i class="b"></i><svg class="s20" viewBox="0 0 20 20"><use href="#tile"/><text x="5" y="10" font-size="10.500">W</text><path d="M3 14h10v-2.500l4 3.500-4 3.500V16H3z"/></svg><span>Word address</span></div>
        <div class="n h20 wd wide"><i></i><i class="v"></i><i class="b"></i><svg class="s20" viewBox="0 0 20 20"><use href="#tile"/><text x="6.500" y="10" font-size="10">B</text><path d="M3 14h10v-2.500l4 3.500-4 3.500V16H3z"/></svg><span>Bit address</span></div>
        <div class="n h20 wd"><i></i><i class="v"></i><i class="l"></i><svg class="s20" viewBox="0 0 20 20"><use href="#tile"/><text x="2" y="10" font-size="8">W-B</text><path d="M3 14h10v-2.500l4 3.500-4 3.500V16H3z"/></svg><span>Word bits</span></div>
        <div class="n h20 wide"><i></i><i class="l"></i><svg class="s20" viewBox="0 0 20 20"><path d="M.5 2.500h19v17H.5z" fill="#fff" stroke="#333"/><path d="M1 2h18v5H1z" fill="#22a6d8"/><path d="M3.500 0h2v4h-2zM14.500 0h2v4h-2z" fill="#fff" stroke="#333" stroke-width=".7"/><path d="M2 9.500h16M8 12.500h10M8 15.500h10" stroke="#555" stroke-dasharray="2 1"/><path d="M2 13h5v3H2z" fill="#555"/></svg><span>Schedule Table</span></div>
      </div>
    </div>
    <div class="project-tab">Project</div>
  </aside>

  <section class="editor">
    <div class="canvas">
      <div class="lamp p1"><span>OFF</span></div>
      <div class="lamp p2"><span>OFF</span></div>
      <div class="lamp p3"><span>OFF</span></div>
      <div class="lamp p4"><span>OFF</span></div>
      <div class="num p5">11110000</div>
      <div class="num p6">11110000</div>
      <div class="key p7">Set On</div>
      <div class="key p8">Set On</div>
      <div class="key p9">Set OFF</div>
      <div class="key p10">Set OFF</div>
    </div>
  </section>

  <aside class="dock right">
    <div class="dock-title"><span>Tool Box</span><svg class="ri" viewBox="0 0 9 9"><use href="#restore"/></svg><svg class="cl" viewBox="0 0 9 8"><use href="#close"/></svg></div>
    <div class="tabs"><div class="tab on">Function elements</div><div class="tab">Base elements</div></div>
    <div class="right-body">
      <div class="scroller">
        <div class="group">
          <div class="legend">Function graphics</div>
          <div class="grid">
            <div class="it r1"><svg viewBox="0 0 30 30"><use href="#frame"/><path d="M6 8h10v17H6z" fill="#5d5d5d"/><path d="M5 5h12l-1 4H6z" fill="#c8181c" stroke="#7a0d0d" stroke-width=".6"/><path d="M6.500 11h2v8h-2zM10 11h2v8h-2zM13.500 11h2v8h-2z" fill="#fff" stroke="#222" stroke-width=".6"/><text x="17.500" y="10.500" class="red" font-size="5.500" textLength="9">OFF</text><text x="18" y="25" class="red" font-size="5.500" textLength="8">ON</text></svg><span>Bit switch</span></div>
            <div class="it r1"><svg viewBox="0 0 30 30"><use href="#frame"/><circle cx="15" cy="15" r="9.500" fill="#bbb" stroke="#444" stroke-width="1.300"/><circle cx="15" cy="15" r="7.500" fill="none" stroke="#eee"/><path d="M6 15h18" stroke="#666"/><rect x="12.500" y="6" width="5" height="18" rx="1.500" fill="#d9201f" stroke="#6b1010" stroke-width=".7"/></svg><span>Word<br>switch</span></div>
            <div class="it r1"><svg viewBox="0 0 30 30"><use href="#frame"/><path d="M4.500 4.500h14v20h-14z" fill="#fff" stroke="#222"/><path d="M5 5h11v17H5z" fill="#7fe8f4"/><path d="M16 6l9-1v20l-9-4z" fill="#c8181c" stroke="#5a0d0d"/><path d="M8 10l10 4v-2l4 4-6 2v-2L8 12z" fill="#15b02c"/><path d="M5 19c2-2 5-2 7-1v7H6z" fill="#f6c69b" stroke="#a66f44" stroke-width=".6"/></svg><span>Screen<br>Button</span></div>

            <div class="it cutl"><svg viewBox="0 0 30 30"><use href="#frame"/><g fill="none" stroke-width="1.800" stroke-dasharray="9 3"><circle cx="8" cy="6.500" r="2" stroke="#c22"/><circle cx="8" cy="14" r="2" stroke="#2a8a3a"/><circle cx="8" cy="22" r="2" stroke="#e99b2b"/></g><path d="M12 8l12 5-4 2 5 5-3 3-5-5-2 4z" fill="#e01515" stroke="#7a0d0d" stroke-width=".6"/></svg><span>Function<br>Button</span></div>
            <div class="it cutl"><svg viewBox="0 0 30 30"><use href="#frame"/><path d="M11 18c-6-4-4-13 4-13s9 9 3 13v2h-7z" fill="#fbd42e" stroke="#c79a14" stroke-width=".8"/><circle cx="12" cy="10" r="2.500" fill="#fff3b0"/><path d="M11.500 20h6v4h-6z" fill="#8a8a8a" stroke="#555" stroke-width=".6"/></svg><span>Bit Lamp</span></div>
            <div class="it cutl"><svg viewBox="0 0 30 30"><path d="M2 2h6v22H2z" fill="#cf1f1f"/><path d="M9 2h6v22H9z" fill="#2b62e3"/><path d="M16 2h6v22h-6z" fill="#10a03a"/><path d="M23 2h5v22h-5z" fill="#e9ae20"/><path d="M1.500 23.500h6v4h-6zM8.500 23.500h6v4h-6zM15.500 23.500h6v4h-6zM22.500 23.500h6v4h-6z" fill="#fff" stroke="#678"/><path d="M8.500 2v21M15.500 2v21M22.500 2v21" stroke="#cdd" stroke-width=".8"/></svg><span>MultiState<br>Lamp</span></div>

            <div class="it cutl"><svg viewBox="0 0 30 30"><path d="M2 0h8v11H2z" fill="#cf1f1f"/><path d="M11 0h8v11h-8z" fill="#e9ae20"/><path d="M20 0h9v11h-9z" fill="#20d0d6"/><path d="M2 16h8v10H2z" fill="#2b62e3"/><path d="M11 16h8v10h-8z" fill="#10a03a"/><path d="M20 16h9v10h-9z" fill="#e31ae0"/><path d="M1.500 11.500h8v2.500h-8zM10.500 11.500h8v2.500h-8zM19.500 11.500h9v2.500h-9zM1.500 26.500h8v2.500h-8zM10.500 26.500h8v2.500h-8zM19.500 26.500h9v2.500h-9z" fill="#fff" stroke="#567"/></svg><span>MultiState<br>Switch</span></div>
            <div class="it cutl"><svg viewBox="0 0 30 30"><use href="#frame"/><text x="4" y="19" class="red" font-size="12.500" textLength="22">123</text></svg><span>Numentric<br>Display</span></div>
            <div class="it cutl"><svg viewBox="0 0 30 30"><use href="#frame"/><text x="4" y="12.500" class="red" font-size="12.500" textLength="22">123</text><path d="M3 18h8v-3l8 5.500-8 5.500v-3H3z" fill="#df2020" stroke="#7a0d0d"/></svg><span>Numerical<br>Input</span></div>

            <div class="it cutl"><svg viewBox="0 0 30 30"><use href="#frame"/><text x="3" y="18" class="red heavy" font-size="8.500" textLength="24" lengthAdjust="spacingAndGlyphs">ASCII</text></svg><span>ASCII<br>Display</span></div>
            <div class="it cutl"><svg viewBox="0 0 30 30"><use href="#frame"/><text x="3" y="12" class="red heavy" font-size="8.500" textLength="24" lengthAdjust="spacingAndGlyphs">ASCII</text><path d="M3 18h8v-3l8 5.500-8 5.500v-3H3z" fill="#df2020" stroke="#7a0d0d"/></svg><span>ASCII<br>Entry</span></div>
            <div class="it cutl"><svg viewBox="0 0 30 30"><path d="M1 0h28v14H1z" fill="#55ffff"/><path d="M1 14h28v16H1z" fill="#f00"/></svg><span>Bar<br>Graph</span></div>

            <div class="it"><svg viewBox="0 0 30 30"><circle cx="15" cy="15" r="13.800" fill="url(#gC)" stroke="#b9c7d2" stroke-width="2"/><path d="M15 3v3M15 24v3M3 15h3M24 15h3M6.500 6.500l2 2M23.500 23.500l-2-2M23.500 6.500l-2 2M6.500 23.500l2-2" stroke="#fff" stroke-width="1.300"/><path d="M15 6v9l6 6" fill="none" stroke="#fff" stroke-width="2"/></svg><span>Time<br>Display</span></div>
            <div class="it"><svg viewBox="0 0 30 30"><path d="M.5 4.500h29v24H.5z" fill="#f4f4f4" stroke="#999"/><path d="M0 4h30v2.500H0z" fill="#1769c8"/><text x="4" y="12" font-size="5" font-weight="700" textLength="22">JUNE</text><text x="9.500" y="26" font-size="18" font-weight="700">1</text><path d="M1 28l5-1-5-7z" fill="#ccc" stroke="#888" stroke-width=".5"/></svg><span>Date<br>Display</span></div>
            <div class="it"><svg viewBox="0 0 30 30"><path d="M.5.500h29v28H.5z" fill="#f4f4f4" stroke="#888"/><path d="M0 0h30v6H0z" fill="#2f7fcc"/><text x="3.500" y="21" font-size="11" class="heavy" textLength="23" lengthAdjust="spacingAndGlyphs" font-weight="700" stroke="#000">MON</text><path d="M1 28l5-1-5-6z" fill="#ccc" stroke="#888" stroke-width=".5"/></svg><span>Week<br>Display</span></div>

            <div class="it r6"><svg viewBox="0 0 30 30"><path d="M1.700 5.700h26.600v20.600H1.700z" fill="#dff0c8" stroke="#a8651c" stroke-width="3.400"/><path d="M4 8h22v9H4z" fill="#bfe3f6"/><path d="M4 18q11-5 22 0v6H4z" fill="#8ec63f"/><circle cx="10" cy="12" r="3" fill="#f5b030"/><ellipse cx="19" cy="14" rx="3.800" ry="4.500" fill="#3f8a2a"/><path d="M18.500 17h1.200v4h-1.200z" fill="#5a3a10"/><path d="M12 24h7v1.500h-7z" fill="#ffd84a"/></svg><span>Static<br>Picture</span></div>
            <div class="it r6"><svg viewBox="0 0 30 30"><use href="#pic" x="0" y="3.500" width="30" height="24"/><circle cx="12" cy="11" r="4" fill="#4f9a35"/><path d="M11.500 14h1.500v6h-1.500z" fill="#5a3a10"/></svg><span>Picture<br>Display</span></div>
            <div class="it r6"><svg viewBox="0 0 30 30"><use href="#pic" x="0" y="3.500" width="30" height="24"/><text x="6" y="17" font-size="13.500" font-weight="700" textLength="21" lengthAdjust="spacingAndGlyphs">GIF</text></svg><span>GIF<br>Display</span></div>

            <div class="it"><svg viewBox="0 0 30 30"><path d="M3 14l12 13 15-16" fill="none" stroke="#109a38" stroke-width="2"/><path d="M2 28l13-11 8 7 7-7" fill="none" stroke="#f01010" stroke-width="2"/><path d="M3 20L15 8l15 17" fill="none" stroke="#1010f0" stroke-width="2"/><path d="M1 0v30h30M1 5h3M1 10h3M1 15h3M1 20h3" fill="none" stroke="#000" stroke-width="2"/></svg><span>Trend<br>Chart</span></div>
            <div class="it"><svg viewBox="0 0 30 30"><path d="M8 22L24 6" stroke="#f01010" stroke-width="2.500"/><path d="M19 5h7v7z" fill="#f01010"/><path d="M26 23L9 6" stroke="#1010f0" stroke-width="2.500"/><path d="M8 12V5h7z" fill="#1010f0"/><path d="M2 1v28h28M0 3h4M27 27v4M2 8h3M2 13h3M2 18h3M2 23h3M8 28v-2M13 28v-2M18 28v-2M23 28v-2" fill="none" stroke="#000" stroke-width="1.800"/></svg><span>XYTrend<br>Chart</span></div>
            <div class="it"><svg viewBox="0 0 30 30"><path d="M.5.500h28v28H.5z" fill="#f2f2f2" stroke="#999"/><path d="M1 7h27M1 14h27M1 21h27M7 1v27M14 1v27M21 1v27" stroke="#ccc" stroke-width=".8"/><path d="M2 14c6-4 8 8 13 5s5-9 12-14" fill="none" stroke="#5a9e2f" stroke-width="1.300"/><path d="M2 27c3-12 8-17 25-15" fill="none" stroke="#d44" stroke-width="1.300"/><path d="M2 5c8-3 12 4 15 10" fill="none" stroke="#48a" stroke-width="1.300"/><circle cx="22" cy="22" r="5.500" fill="#bfe6fb" stroke="#678" stroke-width="1.300"/><path d="M26 26l4 4" stroke="#c89a4b" stroke-width="3"/></svg><span>Historic<br>trend</span></div>

            <div class="it cutl"><svg viewBox="0 0 30 30"><path d="M2 25V13a13 13 0 0 1 27 0v12z" fill="url(#gR)"/><path d="M-1 24h32v7H-1z" fill="url(#gM)"/></svg><span>Alarm<br>Display</span></div>
            <div class="it up"><svg viewBox="0 0 30 30"><path d="M1.500 1.500h27v26h-27z" fill="#fff" stroke="#234a70"/><path d="M2 2h26v4H2z" fill="#2f8bcf"/><path d="M8 2h7v25H8z" fill="#f00"/><path d="M15.500 2v25M21.500 2v25" stroke="#234a70"/></svg><span>Alarm Bar</span></div>
            <div class="it up"><svg viewBox="0 0 30 30"><path d="M.5 1.500h25v23H.5z" fill="#fff" stroke="#456"/><path d="M0 1h26v5H0z" fill="#1c6fc2"/><path d="M2 10.500h22M2 14.500h22M2 18.500h22M5.500 7v17M9.500 7v17M13.500 7v17M17.500 7v17M21.500 7v17" stroke="#89a"/><path d="M18 8l11 20H8z" fill="#f4511e" stroke="#c7360c"/><path d="M18 14v8M18 24v2" stroke="#fff" stroke-width="2"/></svg><span>History<br>Alarm</span></div>

            <div class="it dn"><svg viewBox="0 0 30 30"><path d="M3.500 3.500h9v9h-9zM3.500 16.500h9v9h-9zM17.500 16.500h9v9h-9z" fill="url(#gB)" stroke="#234a70"/><path d="M22 2l6 6-6 6-6-6z" fill="#8fd322" stroke="#3f7a10"/></svg><span>Recipe<br>selector</span></div>
            <div class="it dn mid"><svg viewBox="0 0 30 30"><path d="M1.500 4.500h14v-3h13v26h-13v-3h-14z" fill="#eef5fb" stroke="#334"/><path d="M3.500 8.500h4v4h-4zM3.500 16.500h4v4h-4zM10.500 16.500h4v4h-4z" fill="#2b82cf" stroke="#123"/><path d="M13 7l3.500 3.500L13 14l-3.500-3.500z" fill="#8fd322" stroke="#3f7a10"/><path d="M18.500 4.500h8v8h-8zM18.500 16.500h8v8h-8z" fill="#fff" stroke="#334"/><path d="M20 8.500l2 2 4-5M20 20.500l2 2 4-5" fill="none" stroke="#334"/></svg><span>Recipe<br>display</span></div>
            <div class="it dn low"><svg viewBox="0 0 30 30"><path d="M1.500 1.500h27v26h-27z" fill="#fff" stroke="#334"/><circle cx="9" cy="9" r="4.300" fill="#86b94c" stroke="#557a2a"/><circle cx="9" cy="20.500" r="4.300" fill="#18a2de" stroke="#0d6ea0"/><path d="M16.500 5.500h9v8h-9zM16.500 17.500h9v8h-9z" fill="#fff" stroke="#334"/><path d="M18.500 9l2 2 4-5M18.500 21l2 2 4-5" fill="none" stroke="#334"/></svg><span>Multi-<br>function</span></div>

            <div class="it peek"><svg viewBox="0 0 30 30"><path d="M15 1l5 5v4H10V6z"/></svg></div>
            <div class="it peek"></div>
            <div class="it peek"><svg viewBox="0 0 30 30"><path d="M10.500 2l7 7h-14z" fill="#a9d0ee" stroke="#234a70"/></svg></div>
          </div>
        </div>
      </div>
      <div class="vbar"><b class="ar up-a"></b><b class="thumb"></b><b class="ar down-a"></b></div>
      <div class="hbar"><b class="ar left-a"></b><b class="thumb"></b><u></u><b class="ar right-a"></b></div>
      <div class="corner"></div>
    </div>
  </aside>
</main>

<footer class="output">
  <div class="strip"><svg viewBox="0 0 9 8"><use href="#close"/></svg><svg viewBox="0 0 9 9"><use href="#restore"/></svg></div>
  <div class="log"></div>
</footer>
</body>
</html>
```

FILE: styles.css
```css
* { box-sizing: border-box; }
body { margin: 0; width: 1911px; height: 907px; overflow: hidden; background: #f0f0f0; display: flex; flex-direction: column; font-family: "DejaVu Sans Condensed", "DejaVu Sans", sans-serif; font-size: 12px; color: #000; }
.defs { position: absolute; }
svg { display: block; flex: none; overflow: visible; }
svg text { font-family: "Liberation Sans", sans-serif; }
svg .serif { font-family: "Liberation Serif", serif; font-weight: 700; }

.toolbars { border-top: 3px solid #dcdcdc; height: 92px; flex: none; }
.bar-row { display: flex; }
.row-main { height: 46px; }
.row-align { height: 43px; }
.bar { display: flex; align-items: flex-start; background: #c4dcff; border: 1px solid #fff; border-right-color: #a0a0a0; border-bottom-color: #a0a0a0; flex: none; }
.bar svg { width: 28px; height: 28px; }
.row-main .bar { padding-top: 7px; }
.row-align .bar { padding-top: 6px; }
.btn { display: flex; justify-content: center; flex: none; }
.grip { position: relative; }
.grip::before { content: ""; position: absolute; left: 2px; top: 1px; bottom: 1px; width: 8px; background: radial-gradient(circle at 1px 1px, #9aa9bd 1px, transparent 1.200px) 0 0/5px 4px, radial-gradient(circle at 2px 2px, #fff 1.200px, transparent 1.400px) 0 0/5px 4px; }
.t1 { width: 345px; padding-left: 3px; border-left: 0; }
.t1 .btn { width: 34px; }
.dim { opacity: .6; }
.t2 { width: 174px; padding-left: 11px; }
.t2 .btn { width: 40.200px; }
.t3 { width: 294px; padding-left: 11px; }
.t3 .btn { width: 40px; }
.t4 { width: 174px; padding-left: 10px; }
.t4 .btn { width: 40.200px; }
.t5, .a5 { flex: 1; border-right: 0; }
.row-main .t5 { padding: 12px 0 0 22px; gap: 6px; }
.a1 { width: 430px; padding-left: 3px; border-left: 0; }
.a1 .btn { width: 38px; }
.sep { width: 7px; height: 35px; background: linear-gradient(#7b8ba5, #7b8ba5) 2px 0/1px 100% no-repeat; margin-top: -3px; }
.a2 { width: 174px; padding-left: 10px; }
.a2 .btn { width: 40.200px; }
.a3 { width: 134px; padding-left: 11px; }
.a3 .btn { width: 40.200px; }
.a4 { width: 94px; padding-left: 11px; }
.a4 .btn, .a5 .btn { width: 40px; }
.a5 { padding-left: 12px; }
.ln path { fill: none; stroke: #2f4a66; stroke-width: 1.300; }
.ln .f { fill: url(#gL); stroke: #1f5f99; }
.ln .k { fill: #9ccdf2; stroke-width: 2; }
.ln .m { fill: #5aabe6; stroke-width: 1; stroke-dasharray: 1 1; }
.sq .b { fill: url(#gB); stroke: #1d4770; }
.sq .w { fill: #fff; stroke: #33475a; }

.combo { display: flex; width: 81px; height: 20px; background: #c4dcff; border: 2px solid #6e6e6e; border-color: #777 #fff #fff #777; color: #0b2a6b; padding-right: 1px; font-size: 12.700px; }
.combo span { flex: 1; padding-left: 1px; line-height: 17px; }
.combo i { width: 15px; height: 15px; border: 1px solid #fff; border-right-color: #777; border-bottom-color: #777; box-shadow: 1px 1px 0 #777; display: flex; justify-content: center; }
.combo i::before { content: ""; margin-top: 5px; width: 0; height: 0; border: 4px solid transparent; border-top-color: #0b2a6b; border-bottom: 0; }

.work { display: flex; height: 779px; flex: none; }
.dock { display: flex; flex-direction: column; flex: none; }
.dock-title { display: flex; align-items: center; height: 22px; background: #97b2de; padding: 2px 4px 0 5px; font-size: 13px; flex: none; }
.dock-title span { flex: 1; }
.dock-title .cut { margin-left: -8px; }
.dock-title .ri { width: 9px; height: 9px; margin: 0 7px 3px 0; }
.dock-title .cl { width: 9px; height: 8px; margin-bottom: 3px; }
.left { width: 277px; }
.left-body { width: 273px; height: 722px; margin-top: 2px; background: #f9f9f9; border: 1px solid #7f8590; border-left: 0; padding: 12px 0 0 5px; box-shadow: 1px 1px 0 #fff, 2px 2px 0 #e0e0e0; flex: none; }
.select { display: flex; width: 256px; height: 22px; background: #fff; border: 1px solid #a6a6a6; border-right: 2px solid #aaa; border-bottom: 2px solid #999; padding-left: 3px; font-size: 12.600px; line-height: 20px; }
.select span { flex: 1; }
.select b { width: 15px; border: 1px solid #ccc; display: flex; align-items: center; justify-content: center; }
.select svg { width: 9px; height: 6px; }
.tree { width: 255px; height: 674px; background: #fff; border: 1px solid #e0e0e0; border-left: 2px solid #777; border-top-color: #777; font-family: "Liberation Sans", sans-serif; font-size: 13.300px; }
.n { display: flex; align-items: center; }
.h16 { height: 16px; } .h17 { height: 17px; } .h19 { height: 19px; } .h20 { height: 20px; }
.n span { white-space: nowrap; line-height: 16px; padding-top: 1px; }
.wide span { letter-spacing: .15px; }
.n > i { width: 20px; height: 100%; flex: none; background-repeat: no-repeat; position: relative; }
.n > i.v { background: repeating-linear-gradient(#999 0 1px, transparent 1px 2px) 10px 0/1px 100% no-repeat; }
.n > i.b { background: repeating-linear-gradient(#999 0 1px, transparent 1px 2px) 10px 0/1px 100% no-repeat, repeating-linear-gradient(90deg, #999 0 1px, transparent 1px 2px) 10px 50%/10px 1px no-repeat; }
.n > i.l { background: repeating-linear-gradient(#999 0 1px, transparent 1px 2px) 10px 0/1px 50% no-repeat, repeating-linear-gradient(90deg, #999 0 1px, transparent 1px 2px) 10px 50%/10px 1px no-repeat; }
.n > i.root { background: repeating-linear-gradient(90deg, #999 0 1px, transparent 1px 2px) 10px 50%/10px 1px no-repeat; }
.n > i.x::before { content: ""; position: absolute; left: 6px; top: calc(50% - 4px); width: 9px; height: 9px; border: 1px solid #a0a0a0; border-radius: 1px; background: linear-gradient(#3c5aa0, #3c5aa0) 1px 3px/5px 1px no-repeat, #f6f6f6; }
.s16 { width: 16px; height: 16px; margin: 0 6px 0 3px; }
.s20 { width: 20px; height: 20px; margin: 0 6px 0 3px; }
.sc .s20 { margin-right: 4px; }
.sc text { font-family: "Liberation Serif", serif; font-weight: 700; font-size: 11px; fill: #e8121a; }
.wd text { font-weight: 700; fill: #2a87d6; }
.wd path { fill: #2a87d6; }
.sel { flex: 1; height: 20px; display: flex; align-items: center; background: #efefef; font-family: "Open Sans", "Noto Sans", sans-serif; font-size: 12.200px; }
.project-tab { width: 61px; height: 25px; background: #f9f9f9; border: 1px solid #dedede; border-left: 0; border-top: 0; padding-left: 6px; line-height: 26px; font-size: 13px; margin-top: 1px; }

.editor { width: 1320px; height: 750px; margin: 11px 18px 0 18px; background: #fff; border: 1px solid #868686; flex: none; }
.canvas { position: relative; width: 801px; height: 481px; background: #e5e5fa; border: 1px solid #000; font-family: "Liberation Sans", sans-serif; font-size: 12px; }
.lamp, .num, .key { position: absolute; display: flex; align-items: center; justify-content: center; background: #c0c0c0; }
.lamp { width: 100px; height: 101px; border-radius: 50%; border: 9px solid #e0e0e0; border-left-width: 10px; padding-bottom: 2px; }
.num { width: 69px; height: 53px; }
.key { width: 79px; height: 77px; }
.p1 { left: 61px; top: 17px; } .p2 { left: 234px; top: 16px; }
.p3 { left: 428px; top: 17px; } .p4 { left: 597px; top: 16px; }
.p5 { left: 30px; top: 179px; } .p6 { left: 30px; top: 255px; }
.p7 { left: 317px; top: 209px; } .p8 { left: 495px; top: 210px; }
.p9 { left: 318px; top: 344px; } .p10 { left: 495px; top: 342px; }

.right { width: 278px; }
.tabs { display: flex; align-items: flex-end; height: 24px; padding-top: 1px; font-size: 12.700px; flex: none; }
.tab { width: 109px; height: 21px; background: #f3f3f3; border: 1px solid #e2e2e2; text-align: center; line-height: 20px; }
.tab.on { width: 135px; height: 23px; background: #f9f9f9; border-color: #fff; line-height: 22px; }
.right-body { display: grid; grid-template: 698px 21px / 249px 21px; width: 272px; height: 721px; margin: 1px 0 0 2px; background: #fff; border: 1px solid #7f8590; box-shadow: 0 0 0 2px #f9f9f9, 1px 2px 0 2px #e0e0e0; flex: none; }
.scroller { overflow: hidden; padding: 18px 0 0 10px; }
.group { border-left: 1px solid #dcdcdc; border-top: 1px solid #dcdcdc; height: 800px; position: relative; padding-top: 18px; }
.legend { position: absolute; left: 6px; top: -9px; padding: 0 2px; background: #fff; color: #14306e; font-family: "Liberation Sans", sans-serif; font-size: 13.300px; line-height: 18px; }
.grid { display: grid; grid-template-columns: 80px 80px 78px; grid-template-rows: 75px 70px 70px 70px 70px 80px 70px 70px 80px 20px; margin-left: -4px; }
.it { display: flex; flex-direction: column; align-items: center; color: #14306e; font-family: "Liberation Sans", sans-serif; font-size: 13.300px; line-height: 16px; text-align: center; }
.it svg { width: 30px; height: 30px; }
.it span { margin-top: 4px; padding-left: 6px; white-space: nowrap; }
.it:nth-child(3n) { width: 80px; }
.it:nth-child(3n) span { padding-left: 5px; }
.it:nth-child(3n+2) span { padding-left: 5px; }
.r1 span { margin-top: 9px; }
.cutl span { height: 30px; overflow: hidden; }
.it.up span { margin-top: 3px; }
.dn span { margin-top: 3px; }
.it.mid span { padding-left: 0; margin-top: 4px; margin-right: 6px; }
.it.low span { padding-left: 0; margin-top: 9px; margin-right: 5px; }
.r6 span { margin-top: 4px; }
.red { font-weight: 700; fill: #d01818; }
.heavy { stroke-width: .5; }
.red.heavy { stroke: #d01818; }

.vbar { display: flex; flex-direction: column; background: repeating-conic-gradient(#c4dcff 0 25%, #fff 0 50%) 0 0/2px 2px; }
.hbar { display: flex; background: repeating-conic-gradient(#c4dcff 0 25%, #fff 0 50%) 0 0/2px 2px; }
.corner { background: #c4dcff; }
.vbar b, .hbar b { background: #c4dcff; border: 1px solid #fff; border-right-color: #777; border-bottom: 2px solid #777; display: flex; align-items: center; justify-content: center; flex: none; }
.ar { width: 21px; height: 21px; }
.ar::before { content: ""; border: 5px solid transparent; }
.vbar b.up-a, .vbar b.down-a { padding-right: 2px; }
.hbar b.left-a, .hbar b.right-a { padding-right: 2px; }
.up-a::before { border-bottom-color: #000; border-top: 0; }
.down-a::before { border-top-color: #000; border-bottom: 0; }
.left-a::before { border-right-color: #000; border-left: 0; }
.right-a::before { border-left-color: #000; border-right: 0; }
.vbar .thumb { height: 331px; }
.vbar .down-a { margin-top: auto; }
.hbar .thumb { width: 190px; }
.hbar u { flex: 1; }

.output { display: flex; height: 36px; flex: none; }
.strip { width: 13px; background: #c0c0c0; border-top: 1px solid #b0b0b0; display: flex; flex-direction: column; gap: 8px; padding-top: 4px; }
.strip svg { width: 9px; height: 9px; margin-left: -4px; }
.log { flex: 1; background: #fff; border: 1px solid #7f8590; border-bottom: 0; }
```
